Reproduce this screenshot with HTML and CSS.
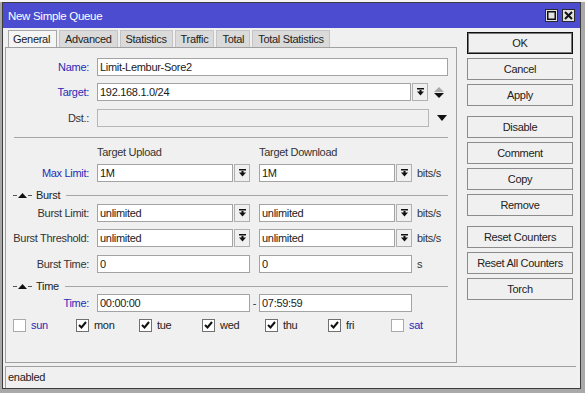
FILE: index.html
```html
<!DOCTYPE html>
<html lang="en">
<head>
    <meta charset="UTF-8">
    <title>New Simple Queue</title>
    <link rel="stylesheet" href="styles.css">
</head>
<body>
    <div class="window">
        <div class="titlebar">
            <span class="title">New Simple Queue</span>
            <div class="wbtns">
                <span class="wbtn"><svg width="9" height="9" viewBox="0 0 9 9"><rect x="0.75" y="0.75" width="7.5" height="7.5" fill="none" stroke="#111" stroke-width="1.5"/></svg></span>
                <span class="wbtn"><svg width="9" height="9" viewBox="0 0 9 9"><path d="M1 1L8 8M8 1L1 8" stroke="#111" stroke-width="2"/></svg></span>
            </div>
        </div>

        <div class="client">
            <div class="main">
                <div class="tabs">
                    <span class="tab active">General</span>
                    <span class="tab">Advanced</span>
                    <span class="tab">Statistics</span>
                    <span class="tab">Traffic</span>
                    <span class="tab">Total</span>
                    <span class="tab">Total Statistics</span>
                </div>

                <div class="panel">
                    <div class="row r-name">
                        <span class="lbl blue">Name:</span>
                        <span class="field w-name">Limit-Lembur-Sore2</span>
                    </div>
                    <div class="row r-target">
                        <span class="lbl blue">Target:</span>
                        <span class="field w-target">192.168.1.0/24</span>
                        <span class="ddbtn"><svg width="7" height="8" viewBox="0 0 7 8"><rect x="0" y="0" width="7" height="1.5"/><rect x="2.5" y="2" width="2" height="2"/><path d="M0 3.5h7L3.5 7.5z"/></svg></span>
                        <span class="updown"><svg width="10" height="11" viewBox="0 0 10 11"><path d="M5 0L10 5H0z" fill="#a8a8a8"/><path d="M0 6h10L5 11z" fill="#111"/></svg></span>
                    </div>
                    <div class="row r-dst">
                        <span class="lbl">Dst.:</span>
                        <span class="field disabled w-dst"></span>
                        <span class="drop"><svg width="10" height="6" viewBox="0 0 10 6"><path d="M0 0h10L5 6z" fill="#111"/></svg></span>
                    </div>

                    <div class="sep"></div>

                    <div class="colhead">
                        <span class="colname">Target Upload</span>
                        <span class="colname">Target Download</span>
                    </div>
                    <div class="row r-max">
                        <span class="lbl blue">Max Limit:</span>
                        <span class="field w-half">1M</span>
                        <span class="ddbtn"><svg width="7" height="8" viewBox="0 0 7 8"><rect x="0" y="0" width="7" height="1.5"/><rect x="2.5" y="2" width="2" height="2"/><path d="M0 3.5h7L3.5 7.5z"/></svg></span>
                        <span class="field w-half second">1M</span>
                        <span class="ddbtn"><svg width="7" height="8" viewBox="0 0 7 8"><rect x="0" y="0" width="7" height="1.5"/><rect x="2.5" y="2" width="2" height="2"/><path d="M0 3.5h7L3.5 7.5z"/></svg></span>
                        <span class="unit">bits/s</span>
                    </div>

                    <div class="group r-burst">
                        <span class="dash"></span>
                        <svg class="tri" width="9" height="5" viewBox="0 0 9 5"><path d="M4.5 0L9 5H0z" fill="#111"/></svg>
                        <span class="dash"></span>
                        <span class="gname">Burst</span>
                        <span class="gline"></span>
                    </div>
                    <div class="row r-blimit">
                        <span class="lbl">Burst Limit:</span>
                        <span class="field w-half">unlimited</span>
                        <span class="ddbtn"><svg width="7" height="8" viewBox="0 0 7 8"><rect x="0" y="0" width="7" height="1.5"/><rect x="2.5" y="2" width="2" height="2"/><path d="M0 3.5h7L3.5 7.5z"/></svg></span>
                        <span class="field w-half second">unlimited</span>
                        <span class="ddbtn"><svg width="7" height="8" viewBox="0 0 7 8"><rect x="0" y="0" width="7" height="1.5"/><rect x="2.5" y="2" width="2" height="2"/><path d="M0 3.5h7L3.5 7.5z"/></svg></span>
                        <span class="unit">bits/s</span>
                    </div>
                    <div class="row r-bthres">
                        <span class="lbl">Burst Threshold:</span>
                        <span class="field w-half">unlimited</span>
                        <span class="ddbtn"><svg width="7" height="8" viewBox="0 0 7 8"><rect x="0" y="0" width="7" height="1.5"/><rect x="2.5" y="2" width="2" height="2"/><path d="M0 3.5h7L3.5 7.5z"/></svg></span>
                        <span class="field w-half second">unlimited</span>
                        <span class="ddbtn"><svg width="7" height="8" viewBox="0 0 7 8"><rect x="0" y="0" width="7" height="1.5"/><rect x="2.5" y="2" width="2" height="2"/><path d="M0 3.5h7L3.5 7.5z"/></svg></span>
                        <span class="unit">bits/s</span>
                    </div>
                    <div class="row r-btime">
                        <span class="lbl">Burst Time:</span>
                        <span class="field w-full">0</span>
                        <span class="field w-full second">0</span>
                        <span class="unit">s</span>
                    </div>

                    <div class="group r-time">
                        <span class="dash"></span>
                        <svg class="tri" width="9" height="5" viewBox="0 0 9 5"><path d="M4.5 0L9 5H0z" fill="#111"/></svg>
                        <span class="dash"></span>
                        <span class="gname">Time</span>
                        <span class="gline"></span>
                    </div>
                    <div class="row r-timeval">
                        <span class="lbl blue">Time:</span>
                        <span class="field w-full">00:00:00</span>
                        <span class="to">-</span>
                        <span class="field w-full">07:59:59</span>
                    </div>

                    <div class="days">
                        <span class="day"><span class="box"></span><span class="blue">sun</span></span>
                        <span class="day"><span class="box on"><svg width="9" height="8" viewBox="0 0 9 8"><path d="M1 4l2.5 2.5L8 1" fill="none" stroke="#111" stroke-width="2"/></svg></span>mon</span>
                        <span class="day"><span class="box on"><svg width="9" height="8" viewBox="0 0 9 8"><path d="M1 4l2.5 2.5L8 1" fill="none" stroke="#111" stroke-width="2"/></svg></span>tue</span>
                        <span class="day"><span class="box on"><svg width="9" height="8" viewBox="0 0 9 8"><path d="M1 4l2.5 2.5L8 1" fill="none" stroke="#111" stroke-width="2"/></svg></span>wed</span>
                        <span class="day"><span class="box on"><svg width="9" height="8" viewBox="0 0 9 8"><path d="M1 4l2.5 2.5L8 1" fill="none" stroke="#111" stroke-width="2"/></svg></span>thu</span>
                        <span class="day"><span class="box on"><svg width="9" height="8" viewBox="0 0 9 8"><path d="M1 4l2.5 2.5L8 1" fill="none" stroke="#111" stroke-width="2"/></svg></span>fri</span>
                        <span class="day"><span class="box"></span><span class="blue">sat</span></span>
                    </div>
                </div>
            </div>

            <div class="actions">
                <button class="default">OK</button>
                <button>Cancel</button>
                <button>Apply</button>
                <button class="gap">Disable</button>
                <button>Comment</button>
                <button>Copy</button>
                <button>Remove</button>
                <button class="gap">Reset Counters</button>
                <button>Reset All Counters</button>
                <button>Torch</button>
            </div>
        </div>

        <div class="statusbar">enabled</div>
    </div>
</body>
</html>
```

FILE: styles.css
```css
* {
    box-sizing: border-box;
}
body {
    margin: 0;
    width: 585px;
    height: 393px;
    overflow: hidden;
    background: linear-gradient(#f4f4f4 0 2px, #a9a9a9 2px);
    font-family: "Liberation Sans", Arial, sans-serif;
    font-size: 11px;
    letter-spacing: -0.3px;
    color: #333;
}
.window {
    margin: 2px 0 0 2px;
    width: 579px;
    height: 387px;
    border: 1px solid #3d3d3d;
    background: #f0f0f0;
    display: flex;
    flex-direction: column;
}
.titlebar {
    height: 25px;
    flex: none;
    background: #4c4cd0;
    color: #fff;
    font-size: 11.5px;
    display: flex;
    align-items: center;
    justify-content: space-between;
    padding: 0 5px;
}
.wbtns {
    display: flex;
    gap: 4px;
}
.wbtn {
    width: 13px;
    height: 13px;
    border: 1px solid #2a2a2a;
    background: #e2e2e2;
    display: flex;
    align-items: center;
    justify-content: center;
}
.client {
    flex: 1;
    display: flex;
    padding: 2px 0 0 2px;
}
.main {
    width: 452px;
    display: flex;
    flex-direction: column;
}
.tabs {
    height: 17px;
    display: flex;
    gap: 2px;
    padding-left: 3px;
}
.tab {
    padding: 0 5px;
    line-height: 17px;
    background: #dadada;
    border: 1px solid #c4c4c4;
    border-bottom: none;
    color: #222;
}
.tab.active {
    background: #f5f5f5;
    border-color: #a8a8a8;
    padding: 0 6px 0 4px;
}
.panel {
    height: 316px;
    border: 1px solid #a0a0a0;
    padding-top: 10px;
}
.row {
    display: flex;
    align-items: center;
    height: 18px;
}
.lbl {
    width: 83px;
    margin-right: 8px;
    text-align: right;
    white-space: nowrap;
}
.blue {
    color: #2a2ab6;
}
.field {
    height: 18px;
    border: 1px solid #a3a3a3;
    background: #fff;
    padding-left: 2px;
    line-height: 16px;
    color: #1a1a1a;
    white-space: nowrap;
    overflow: hidden;
}
.field.disabled {
    background: #f0f0f0;
    border-color: #b6b6b6;
}
.w-name { width: 351px; }
.w-target { width: 314px; }
.w-dst { width: 332px; }
.w-half { width: 136px; }
.w-full { width: 153px; }
.field.second {
    margin-left: 9px;
}
.ddbtn {
    width: 16px;
    height: 18px;
    margin-left: 1px;
    border: 1px solid #b0b0b0;
    background: #f0f0f0;
    display: flex;
    align-items: center;
    justify-content: center;
}
.ddbtn svg {
    fill: #111;
}
.updown {
    margin-left: 6px;
    display: flex;
}
.drop {
    margin-left: 8px;
    display: flex;
}
.unit {
    margin-left: 5px;
}
.r-target { margin-top: 7px; }
.r-dst { margin-top: 8px; }
.sep {
    margin: 10px 8px 0 8px;
    border-top: 1px solid #a6a6a6;
}
.colhead {
    margin-top: 7px;
    height: 14px;
    line-height: 14px;
    padding-left: 91px;
    display: flex;
}
.colname {
    width: 162px;
}
.r-max { margin-top: 5px; }
.group {
    height: 14px;
    display: flex;
    align-items: center;
    padding: 0 8px 0 7px;
}
.dash {
    width: 4px;
    border-top: 1px solid #555;
}
.tri {
    margin: 0 1px;
}
.gname {
    margin-left: 4px;
    color: #222;
}
.gline {
    flex: 1;
    margin-left: 6px;
    border-top: 1px solid #a6a6a6;
}
.r-burst { margin-top: 6px; }
.r-blimit { margin-top: 2px; }
.r-bthres { margin-top: 7px; }
.r-btime { margin-top: 8px; }
.r-time { margin-top: 6px; }
.r-timeval { margin-top: 1px; }
.to {
    width: 9px;
    text-align: center;
}
.days {
    margin-top: 6px;
    height: 14px;
    display: flex;
    align-items: center;
    padding-left: 7px;
}
.day {
    width: 63px;
    display: flex;
    align-items: center;
    gap: 5px;
    color: #222;
}
.box {
    width: 13px;
    height: 13px;
    border: 1px solid #aaa;
    background: #fff;
    display: flex;
    align-items: center;
    justify-content: center;
}
.box.on {
    border-color: #707070;
}
.actions {
    width: 106px;
    margin-left: 10px;
    padding-top: 2px;
    display: flex;
    flex-direction: column;
    gap: 4px;
}
.actions button {
    height: 22px;
    border: 1px solid #8c8c8c;
    background: #f0f0f0;
    font-family: inherit;
    font-size: 11px;
    letter-spacing: -0.3px;
    color: #222;
    padding: 0;
}
.actions button.default {
    border-color: #111;
    box-shadow: inset 0 0 0 1px #777;
}
.actions button.gap {
    margin-top: 6px;
}
.statusbar {
    height: 22px;
    flex: none;
    width: 571px;
    margin-left: 2px;
    border-top: 1px solid #a0a0a0;
    border-left: 1px solid #a0a0a0;
    padding-left: 2px;
    line-height: 20px;
    color: #222;
}
```
